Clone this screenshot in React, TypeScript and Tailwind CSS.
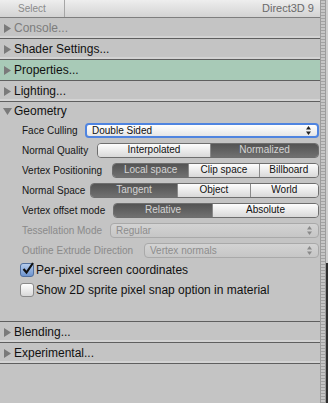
import React from 'react';

const Arrow = ({ open, color = '#7a7a7a' }: { open?: boolean; color?: string }) =>
    open ? (
        <svg width="9" height="8" viewBox="0 0 9 8" className="ml-[3px] mr-[2px]">
            <path d="M0 1 L9 1 L4.5 8 Z" fill={color} />
        </svg>
    ) : (
        <svg width="8" height="9" viewBox="0 0 8 9" className="ml-[3px] mr-[3px]">
            <path d="M1 0 L8 4.5 L1 9 Z" fill={color} />
        </svg>
    );

const UpDown = ({ color }: { color: string }) => (
    <svg width="5" height="9" viewBox="0 0 5 9">
        <path d="M0 3.5 L2.5 0 L5 3.5 Z" fill={color} />
        <path d="M0 5.5 L2.5 9 L5 5.5 Z" fill={color} />
    </svg>
);

// collapsible section header (Console..., Shader Settings... etc.)
const Header = ({ title, dim, active }: { title: string; dim?: boolean; active?: boolean }) => (
    <div
        className={`flex h-[21px] items-center border-b border-[#5f5f5f] text-[12px] ${
            active ? 'bg-[#a8cab7]' : 'bg-[#c4c4c4] shadow-[inset_0_-2px_0_#d3d3d3]'
        } ${dim ? 'text-[#7c7c7c]' : 'text-[#111]'}`}
    >
        <Arrow />
        <span className="-mt-[1px]">{title}</span>
    </div>
);

// labelW = distance from label start to the control
const Row = ({
    label,
    labelW,
    disabled,
    children,
}: {
    label: string;
    labelW: string;
    disabled?: boolean;
    children: React.ReactNode;
}) => (
    <div className="flex h-[20px] items-center pl-[22px] pr-[1px]">
        <span className={`shrink-0 whitespace-nowrap text-[10px] ${labelW} ${disabled ? 'text-[#8a8a8a]' : 'text-[#151515]'}`}>
            {label}
        </span>
        {children}
    </div>
);

const Seg = ({ items, sel, cols }: { items: string[]; sel: number; cols: string }) => (
    <div className={`grid h-[15px] flex-1 overflow-hidden rounded-[4px] border border-[#6e6e6e] ${cols}`}>
        {items.map((t, i) => (
            <div
                key={t}
                className={`flex items-center justify-center text-[10px] leading-none ${
                    i > 0 ? 'border-l border-[#8a8a8a]' : ''
                } ${
                    i === sel
                        ? 'bg-linear-to-b from-[#545454] to-[#707070] text-[#d4d4d4]'
                        : 'bg-linear-to-b from-[#fdfdfd] to-[#d9d9d9] text-[#111]'
                }`}
            >
                {t}
            </div>
        ))}
    </div>
);

const Dropdown = ({ value, disabled, focus }: { value: string; disabled?: boolean; focus?: boolean }) => (
    <div
        className={`flex h-[15px] flex-1 items-center justify-between rounded-[4px] pl-[5px] pr-[6px] text-[10px] ${
            focus
                ? 'border-2 border-[#4f84e0] bg-linear-to-b from-[#ffffff] to-[#e6e6e6] text-[#111]'
                : disabled
                ? 'border border-[#a9a9a9] bg-linear-to-b from-[#d3d3d3] to-[#c6c6c6] text-[#8d8d8d]'
                : 'border border-[#7a7a7a] bg-white text-[#111]'
        }`}
    >
        <span>{value}</span>
        <UpDown color={disabled ? '#8a8a8a' : '#222'} />
    </div>
);

const Check = ({ checked, label }: { checked?: boolean; label: string }) => (
    <div className="flex h-[20px] items-center pl-[20px] text-[12px] text-[#111]">
        <div
            className={`relative mr-[2px] h-[14px] w-[14px] rounded-[3px] border ${
                checked
                    ? 'border-[#51709f] bg-linear-to-b from-[#b5ccec] to-[#6e94cf]'
                    : 'border-[#8a8a8a] bg-linear-to-b from-[#ffffff] to-[#d8d8d8]'
            }`}
        >
            {checked && (
                <svg width="14" height="15" viewBox="0 0 14 15" className="absolute -top-[3px] left-[0px]">
                    <path d="M2.5 8 L5.5 11.5 L12 2" stroke="#111" strokeWidth="2.2" fill="none" />
                </svg>
            )}
        </div>
        <span>{label}</span>
    </div>
);

export default function App() {
    return (
        <div className="flex h-[403px] w-[328px] overflow-hidden bg-[#c4c4c4] font-['Liberation_Sans',Arial,sans-serif]">
            <div className="flex w-[320px] flex-col">
                {/* toolbar */}
                <div className="flex h-[18px] border-b border-[#7e7e7e] bg-linear-to-b from-[#eeeeee] to-[#d3d3d3]">
                    <div className="flex w-[65px] items-center justify-center border-r border-[#a6a6a6] text-[10px] text-[#8a8a8a]">
                        Select
                    </div>
                    <div className="flex flex-1 items-center justify-end pr-[6px] text-[11px] text-[#6a6a6a]">
                        Direct3D 9
                    </div>
                </div>

                <Header title="Console..." dim />
                <Header title="Shader Settings..." />
                <Header title="Properties..." active />
                <Header title="Lighting..." />

                {/* Geometry section */}
                <div className="flex h-[18px] items-center text-[12px] text-[#111]">
                    <Arrow open />
                    <span>Geometry</span>
                </div>
                <Row label="Face Culling" labelW="w-[63px]">
                    <Dropdown value="Double Sided" focus />
                </Row>
                <Row label="Normal Quality" labelW="w-[75px]">
                    <Seg items={['Interpolated', 'Normalized']} sel={1} cols="grid-cols-[113fr_109fr]" />
                </Row>
                <Row label="Vertex Positioning" labelW="w-[90px]">
                    <Seg items={['Local space', 'Clip space', 'Billboard']} sel={0} cols="grid-cols-[76fr_71fr_60fr]" />
                </Row>
                <Row label="Normal Space" labelW="w-[68px]">
                    <Seg items={['Tangent', 'Object', 'World']} sel={0} cols="grid-cols-[87fr_73fr_69fr]" />
                </Row>
                <Row label="Vertex offset mode" labelW="w-[91px]">
                    <Seg items={['Relative', 'Absolute']} sel={0} cols="grid-cols-[99fr_107fr]" />
                </Row>
                <Row label="Tessellation Mode" labelW="w-[88px]" disabled>
                    <Dropdown value="Regular" disabled />
                </Row>
                <Row label="Outline Extrude Direction" labelW="w-[122px]" disabled>
                    <Dropdown value="Vertex normals" disabled />
                </Row>
                <Check checked label="Per-pixel screen coordinates" />
                <Check label="Show 2D sprite pixel snap option in material" />
                <div className="h-[22px] border-b border-[#5f5f5f]" />

                <Header title="Blending..." />
                <Header title="Experimental..." />
                <div className="flex-1" />
            </div>

            {/* scrollbar strip */}
            <div className="w-[6px] border-x border-[#9c9c9c] bg-[repeating-linear-gradient(0deg,#a3a3a3_0px,#a3a3a3_1px,#c6c6c6_1px,#c6c6c6_3px)]" />
            <div className="flex w-[2px] flex-col">
                <div className="h-[263px] bg-[#cfcfcf]" />
                <div className="flex-1 bg-[#2e2e2e]" />
            </div>
        </div>
    );
}
